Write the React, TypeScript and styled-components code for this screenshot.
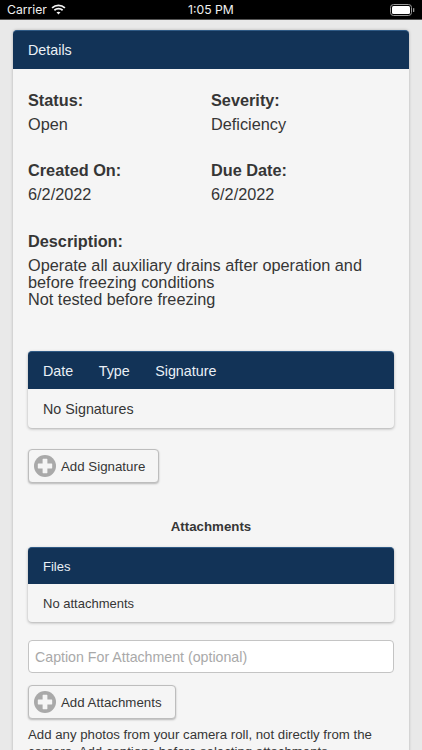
import { createGlobalStyle } from "styled-components";
import styled from "styled-components";

const GlobalStyle = createGlobalStyle`
  html, body {
    margin: 0;
    padding: 0;
    height: 750px;
    overflow: hidden;
    background: #e9e9e9;
    font-family: "Liberation Sans", Arial, sans-serif;
    color: #363636;
  }
`;

const navy = "#123357";

const Screen = styled.div`
  width: 422px;
  height: 750px;
  overflow: hidden;
  display: flex;
  flex-direction: column;
`;

const StatusBar = styled.div`
  height: 20px;
  flex: none;
  box-sizing: border-box;
  background: #000;
  border-bottom: 1px solid #555;
  color: #f0f0f0;
  font-family: Inter, "Liberation Sans", sans-serif;
  font-size: 12.2px;
  display: grid;
  grid-template-columns: 1fr auto 1fr;
  align-items: center;
  padding: 0 7px;
`;

const StatusLeft = styled.div`
  display: flex;
  align-items: center;
  gap: 4px;
`;

const StatusRight = styled.div`
  display: flex;
  justify-content: flex-end;
`;

const Content = styled.div`
  padding: 10px 13px 0;
`;

const Panel = styled.div`
  background: #f5f5f5;
  border-radius: 4px;
  box-shadow: 0 0 3px rgba(0, 0, 0, 0.25);
`;

const Header = styled.div<{ $height: number; $size: number }>`
  height: ${(p) => p.$height}px;
  box-sizing: border-box;
  background: ${navy};
  border-radius: 4px 4px 0 0;
  color: #eaf0f6;
  font-size: ${(p) => p.$size}px;
  padding: 0 15px;
  display: flex;
  align-items: center;
  gap: 25.5px;
  border-top: 1px solid #2f5a85;
`;

const PanelBody = styled.div`
  padding: 21px 15px 40px;
`;

const InfoGrid = styled.div`
  display: grid;
  grid-template-columns: 183px 1fr;
  row-gap: 26px;
`;

const Label = styled.div`
  font-size: 16.3px;
  font-weight: bold;
  line-height: 20px;
  margin-bottom: 4px;
`;

const Value = styled.div`
  font-size: 16.3px;
  line-height: 20px;
`;

const Description = styled.div`
  margin-top: 27px;
  margin-bottom: 43px;
`;

const DescText = styled.div`
  font-size: 16.3px;
  line-height: 17px;
  padding-top: 2px;
`;

const Table = styled.div`
  background: #f5f5f5;
  border-radius: 4px;
  box-shadow: 0 1px 3px rgba(0, 0, 0, 0.3);
`;

const TableRow = styled.div<{ $height: number; $size: number }>`
  height: ${(p) => p.$height}px;
  padding: 0 15px;
  display: flex;
  align-items: center;
  font-size: ${(p) => p.$size}px;
`;

const AddButton = styled.button<{ $top: number }>`
  display: flex;
  align-items: center;
  gap: 5px;
  height: 34px;
  box-sizing: border-box;
  margin-top: ${(p) => p.$top}px;
  padding: 0 13px 0 5px;
  background: #f5f5f5;
  border: 1px solid #bdbdbd;
  border-radius: 4px;
  box-shadow: 0 1px 2px rgba(0, 0, 0, 0.25);
  font-family: inherit;
  font-size: 13.3px;
  color: #363636;
`;

const SectionTitle = styled.div`
  margin-top: 35px;
  margin-bottom: 12px;
  text-align: center;
  font-size: 13.3px;
  font-weight: bold;
  line-height: 17px;
`;

const CaptionInput = styled.input`
  display: block;
  width: 100%;
  height: 33px;
  box-sizing: border-box;
  margin-top: 18px;
  padding: 0 6px;
  background: #fff;
  border: 1px solid #c4c4c4;
  border-radius: 4px;
  font-family: inherit;
  font-size: 14.2px;
  &::placeholder {
    color: #a9a9a9;
    opacity: 1;
  }
`;

const HelpText = styled.p`
  margin: 7px 0 0;
  font-size: 13.22px;
  line-height: 17px;
`;

const WifiIcon = () => (
  <svg width="15" height="11" viewBox="0 0 16 12" fill="none" stroke="#f5f5f5" strokeWidth="1.9">
    <path d="M1 4.2C5 .6 11 .6 15 4.2" />
    <path d="M3.5 6.8C6 4.6 10 4.6 12.5 6.8" />
    <path d="M8 11.4L5.8 9.1C7 8.1 9 8.1 10.2 9.1Z" fill="#f5f5f5" stroke="none" />
  </svg>
);

const BatteryIcon = () => (
  <svg width="25" height="12" viewBox="0 0 25 12">
    <rect x="0.5" y="0.5" width="21" height="11" rx="3" fill="none" stroke="#999" />
    <rect x="2" y="2" width="18" height="8" rx="1.5" fill="#fff" />
    <rect x="23" y="4" width="1.3" height="4" rx="0.6" fill="#999" />
  </svg>
);

const PlusIcon = () => (
  <svg width="22" height="22" viewBox="0 0 23 23">
    <circle cx="11.5" cy="11.5" r="11.5" fill="#a9a9a9" />
    <path d="M9.500 4h4a.5.5 0 0 1 .5.5V9h4.500a.5.5 0 0 1 .5.5v4a.5.5 0 0 1-.5.5H14v4.500a.5.5 0 0 1-.5.5h-4a.5.5 0 0 1-.5-.5V14H4.500a.5.5 0 0 1-.5-.5v-4a.5.5 0 0 1 .5-.5H9V4.500a.5.5 0 0 1 .5-.5z" fill="#f5f5f5" />
  </svg>
);

export default function App() {
  return (
    <Screen>
      <GlobalStyle />
      <StatusBar>
        <StatusLeft>
          <span>Carrier</span>
          <WifiIcon />
        </StatusLeft>
        <span>1:05 PM</span>
        <StatusRight>
          <BatteryIcon />
        </StatusRight>
      </StatusBar>
      <Content>
        <Panel>
          <Header $height={39} $size={14.3}>Details</Header>
          <PanelBody>
            <InfoGrid>
              <div>
                <Label>Status:</Label>
                <Value>Open</Value>
              </div>
              <div>
                <Label>Severity:</Label>
                <Value>Deficiency</Value>
              </div>
              <div>
                <Label>Created On:</Label>
                <Value>6/2/2022</Value>
              </div>
              <div>
                <Label>Due Date:</Label>
                <Value>6/2/2022</Value>
              </div>
            </InfoGrid>
            <Description>
              <Label>Description:</Label>
              <DescText>
                Operate all auxiliary drains after operation and
                <br />
                before freezing conditions
                <br />
                Not tested before freezing
              </DescText>
            </Description>
            <Table>
              <Header $height={38} $size={14.3}>
                <span>Date</span>
                <span>Type</span>
                <span>Signature</span>
              </Header>
              <TableRow $height={39} $size={14.3}>No Signatures</TableRow>
            </Table>
            <AddButton $top={21}>
              <PlusIcon />
              Add Signature
            </AddButton>
            <SectionTitle>Attachments</SectionTitle>
            <Table>
              <Header $height={37} $size={13}>Files</Header>
              <TableRow $height={38} $size={13}>No attachments</TableRow>
            </Table>
            <CaptionInput placeholder="Caption For Attachment (optional)" />
            <AddButton $top={12}>
              <PlusIcon />
              Add Attachments
            </AddButton>
            <HelpText>
              Add any photos from your camera roll, not directly from the camera. Add captions before selecting attachments.
            </HelpText>
          </PanelBody>
        </Panel>
      </Content>
    </Screen>
  );
}
